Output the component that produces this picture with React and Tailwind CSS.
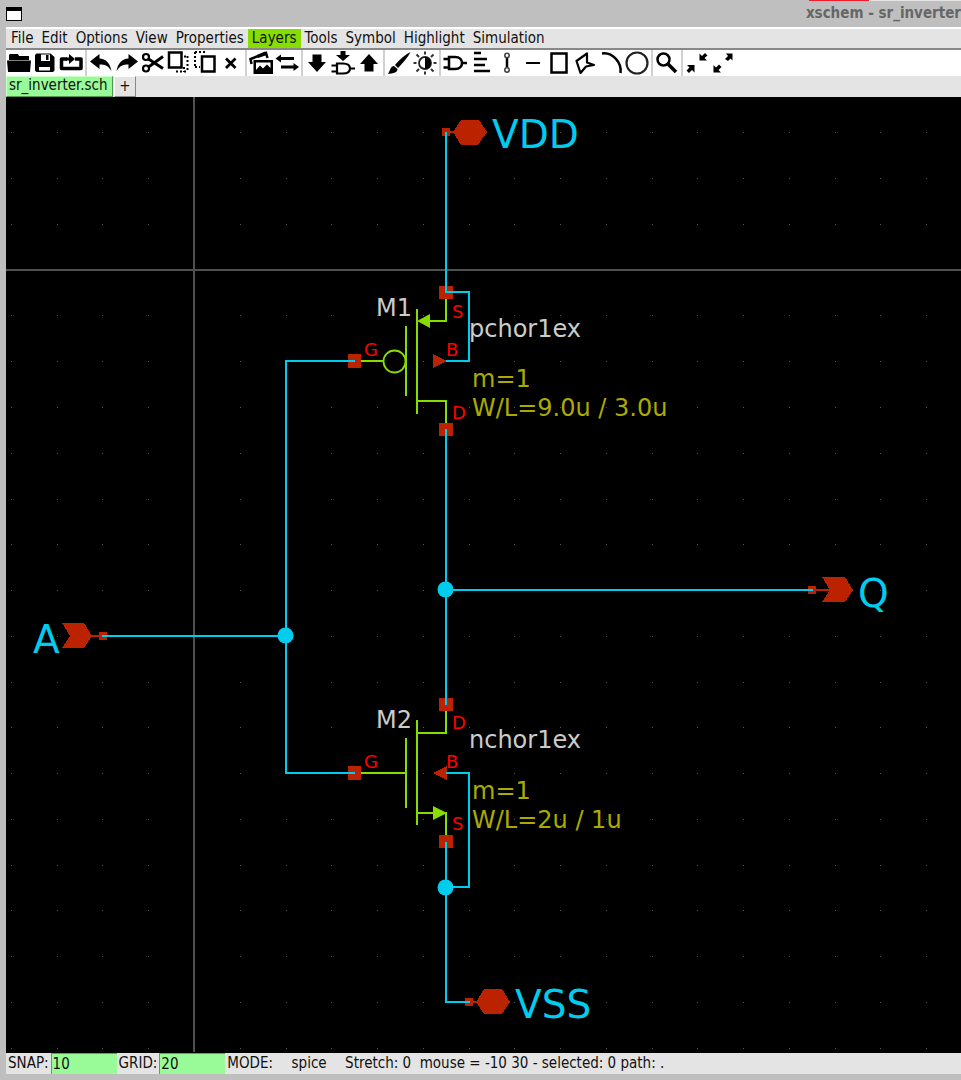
import React from "react";

const MENUS = ["File", "Edit", "Options", "View", "Properties", "Layers", "Tools", "Symbol", "Highlight", "Simulation"];

const ICONS = {
  open: (
    <>
      <path d="M3 10V5l1-1h8l1 2h10v4z" />
      <path d="M1 10.5h24L24 22H2z" />
    </>
  ),
  save: (
    <path
      fillRule="evenodd"
      d="M4.500 3.500H18.500L22.500 7V20.500L21 22H4.500L3 20.500V5zM9 4.500V11H18V4.500zM7 17V20.500H18V17zM14 5H16.500V10H14z"
    />
  ),
  reload: (
    <>
      <path d="M9 9H3.500V18.500H23V9H17" fill="none" stroke="#000" strokeWidth="3.500" strokeLinejoin="round" />
      <path d="M11 4l6 5-6 5V10.500H8v-3h3z" />
    </>
  ),
  undo: <path d="M2 11.500L11.500 4V8.500C18 9 22 13 23.500 21C20 15.500 17 14.500 11.500 14.500V19z" />,
  redo: <path d="M24 11.500L14.500 4V8.500C8 9 4 13 2.500 21C6 15.500 9 14.500 14.500 14.500V19z" />,
  cut: (
    <g fill="none" stroke="#000" strokeWidth="2.200">
      <circle cx="6" cy="7" r="3" />
      <circle cx="6" cy="18.500" r="3" />
      <path d="M8.500 9L23 18.500M8.500 17L23 6.500" strokeWidth="2.800" />
    </g>
  ),
  copy: (
    <g fill="none" stroke="#000">
      <path d="M3 2.500H15.500V17.500H3z" strokeWidth="2.500" />
      <path d="M21.500 6V22M10 21.500H22M18 6.500H22M18 17V22" strokeWidth="2" strokeDasharray="2 2" />
    </g>
  ),
  move: (
    <g fill="none" stroke="#000">
      <path d="M10 6.500H22.500V21.500H10z" strokeWidth="2.500" />
      <path d="M3 2V18M3 2H15M3 17H8" strokeWidth="2" strokeDasharray="2 2" />
    </g>
  ),
  remove: <path d="M8 8.500L17.500 18M17.500 8.500L8 18" stroke="#000" strokeWidth="2.800" />,
  images: (
    <>
      <path d="M3.500 14L2.500 9L18 3L19.500 8" fill="none" stroke="#000" strokeWidth="2.500" />
      <path d="M9 5L17 1.500L19 5L10 8z" />
      <path fillRule="evenodd" d="M5.500 10H25V24H5.500zM8 12.500V20L12 15.500L15 18.500L19 14.500L22.500 18V12.500z" />
    </>
  ),
  swap: (
    <>
      <path d="M1.500 8.500L7 4.500V7H20V10H7V12.500z" />
      <path d="M25 17L19.500 13V15.500H7V18.500H19.500V21z" />
    </>
  ),
  down: <path d="M8.500 4.500H17.500V12H22L13 22L4 12H8.500z" />,
  descend: (
    <>
      <path d="M10.500 1H15.500V5H20L13 11L6 5H10.500z" />
      <path d="M7 13.500H13C18 13.500 20 16 20 18.500C20 21 18 23.500 13 23.500H7zM1.500 15.500H7M1.500 21.500H7M20 18.500H25" fill="none" stroke="#000" strokeWidth="2.200" />
    </>
  ),
  up: <path d="M8.500 21.500H17.500V14H22L13 4L4 14H8.500z" />,
  brush: (
    <>
      <path d="M24.500 2C20 4 14 9 9 15L12 18C17 13 22 7 24.500 2z" />
      <path d="M8 16C4.500 16 4.500 20 2 24C6 23.500 11.500 23 11.500 19z" />
    </>
  ),
  sun: (
    <>
      <circle cx="13" cy="13" r="6" fill="none" stroke="#222" strokeWidth="1.800" />
      <path d="M13 7A6 6 0 0 1 13 19z" />
      <path d="M13 1.500V4.500M13 21.500V24.500M1.500 13H4.500M21.500 13H24.500M4.500 4.500L7 7M19 19L21.500 21.500M4.500 21.500L7 19M19 7L21.500 4.500" stroke="#333" strokeWidth="2" />
    </>
  ),
  gate: (
    <path d="M7 7H13C18 7 20 10 20 13C20 16 18 19 13 19H7zM1.500 9H7M1.500 17.500H7M20 13H25" fill="none" stroke="#000" strokeWidth="2.500" />
  ),
  text: <path d="M6 3H13M6 9H19M6 15H17M6 21H22" stroke="#000" strokeWidth="2.500" />,
  wire: (
    <g fill="none" stroke="#444">
      <path d="M13 7V18" stroke="#000" strokeWidth="2.500" />
      <circle cx="13" cy="5.500" r="2.200" strokeWidth="1.600" />
      <circle cx="13" cy="20" r="2.200" strokeWidth="1.600" />
    </g>
  ),
  line: <path d="M6 13H20" stroke="#000" strokeWidth="2" />,
  rect: <path d="M5.500 3.500H20.500V22.500H5.500z" fill="none" stroke="#000" strokeWidth="2.500" />,
  polygon: (
    <path d="M4.500 11L15 3.500L15 12.500L22 15L14 16.500L8.500 23z" fill="none" stroke="#000" strokeWidth="2.200" strokeLinejoin="round" />
  ),
  arc: <path d="M4 3.500C15 2 24 13 22.500 23" fill="none" stroke="#000" strokeWidth="2.500" />,
  circle: <circle cx="13" cy="13" r="10.500" fill="none" stroke="#222" strokeWidth="2.200" />,
  zoom: (
    <g fill="none" stroke="#000">
      <circle cx="9.500" cy="9.500" r="6" strokeWidth="2.500" />
      <path d="M14 14L22 22" strokeWidth="3.500" />
    </g>
  ),
  shrink: (
    <>
      <path d="M3 15H10.500V22.500L8 20L5 23L2.500 20.500L5.500 17.500z" />
      <path d="M15.500 10.500V3.500L18 6L21 3L23.500 5.500L20.500 8L23 10.500z" />
    </>
  ),
  expand: (
    <>
      <path d="M16 3.500H22.500V10.500L20.500 8.500L18 11L15 9L18 6z" />
      <path d="M3.500 15V22.500H11L8.500 20L11.500 17L9 14.500L6 17.500z" />
    </>
  ),
};

const TOOL_GROUPS = [
  [["open", "Open"], ["save", "Save"], ["reload", "Reload"]],
  [["undo", "Undo"], ["redo", "Redo"], ["cut", "Cut"], ["copy", "Duplicate"], ["move", "Move"], ["remove", "Delete"]],
  [["images", "Draw images"], ["swap", "Swap"]],
  [["down", "Push schematic"], ["descend", "Push symbol"], ["up", "Pop"]],
  [["brush", "Change colours"], ["sun", "Toggle theme"]],
  [["gate", "Insert symbol"], ["text", "Insert text"], ["wire", "Insert wire"], ["line", "Insert line"], ["rect", "Insert rectangle"], ["polygon", "Insert polygon"], ["arc", "Insert arc"], ["circle", "Insert circle"]],
  [["zoom", "Zoom box"]],
  [["shrink", "Zoom in"], ["expand", "Zoom full"]],
];

function Toolbar() {
  return (
    <div className="flex h-[26px] shrink-0 items-stretch overflow-hidden bg-white" role="toolbar" aria-label="Tools">
      {TOOL_GROUPS.map((group, i) => (
        <React.Fragment key={i}>
          {i > 0 && <span className="mx-px w-0.5 shrink-0 bg-[#d0d0d0]" />}
          {group.map(([icon, label]) => (
            <button key={icon} type="button" aria-label={label} className="size-[26px] shrink-0">
              <svg viewBox="0 0 26 26" className="size-[26px]">{ICONS[icon]}</svg>
            </button>
          ))}
        </React.Fragment>
      ))}
    </div>
  );
}

const STEP = 45.76;
const GRID_DOTS = [];
for (let r = -3; r <= 24; r++) {
  for (let c = -4; c <= 40; c++) {
    if (r !== 0 && c !== 0) GRID_DOTS.push(`M${Math.round(194 + c * STEP)} ${Math.round(269.7 + r * STEP)}h1v1h-1z`);
  }
}

function Schematic() {
  return (
    <svg className="block h-full min-h-[955px] w-full" role="img" aria-label="sr_inverter schematic" fontFamily="'DejaVu Sans', sans-serif">
      <g transform="translate(-6 -97)">
        <path d={GRID_DOTS.join("")} fill="#555" shapeRendering="crispEdges" />
        <path d="M194 97V3000M6 270H4000" stroke="#505050" strokeWidth="2" />

        <g fill="#bb2200" shapeRendering="crispEdges">
          <path d="M439 286h14v13h-14zM348 354h13v14h-13zM439 423h14v13h-14z" />
          <path d="M439 698h14v13h-14zM348 766h13v14h-13zM439 835h14v13h-14z" />
          <path d="M442 128h8v8h-8zM465 998h8v8h-8zM99 632h8v8h-8zM808 586h8v8h-8z" />
          <path d="M433 354L447 361L433 368zM447 766L433 773L447 780z" />
          <path d="M453 132L461 120H479L487 132L478 145H461z" />
          <path d="M476 1002L484 989H502L510 1002L502 1014H484z" />
          <path d="M62 623H84L92 636L84 648H62L70 636z" />
          <path d="M822 577H845L853 590L845 602H822L830 590z" />
        </g>
        <path d="M450 132H455M473 1002H478M91 636H100M816 590H831" stroke="#bb2200" strokeWidth="2" />

        <g fill="none" stroke="#88dd00" strokeWidth="2">
          <path d="M446 299V321H430M417 309V414M406 326V396M361 361H384M417 401H446V423" />
          <circle cx="394.500" cy="361.500" r="11" strokeWidth="1.800" />
          <path d="M446 711V733H417M417 720V825M406 738V808M361 773H406M417 813H434M446 812V835" />
        </g>
        <path d="M417 321L430 314V328zM447 813L433 806V820z" fill="#88dd00" />

        <g fill="none" stroke="#00ccee" strokeWidth="2">
          <path d="M446 132V292H469V361H446" />
          <path d="M355 361H286V773H355" />
          <path d="M446 429V705M446 590H813M102 636H286" />
          <path d="M446 773H469V887H446M446 842V1002H470" />
        </g>
        <g fill="#00ccee">
          <circle cx="445.500" cy="589.500" r="8" />
          <circle cx="285.500" cy="635.500" r="8" />
          <circle cx="445.500" cy="887.500" r="8" />
        </g>

        <g fill="#00ccee" fontSize="39">
          <text x="492" y="148">VDD</text>
          <text x="515" y="1018">VSS</text>
          <text x="33" y="653">A</text>
          <text x="858" y="607">Q</text>
        </g>
        <g fill="#cccccc" fontSize="24">
          <text x="376" y="316">M1</text>
          <text x="469" y="337">pchor1ex</text>
          <text x="376" y="728">M2</text>
          <text x="469" y="748">nchor1ex</text>
        </g>
        <g fill="#aaaa00" fontSize="24">
          <text x="472" y="387">m=1</text>
          <text x="472" y="416">W/L=9.0u / 3.0u</text>
          <text x="472" y="799">m=1</text>
          <text x="472" y="828">W/L=2u / 1u</text>
        </g>
        <g fill="#ff0000" fontSize="18">
          <text x="452" y="318">S</text>
          <text x="364" y="356">G</text>
          <text x="446" y="356">B</text>
          <text x="452" y="419">D</text>
          <text x="452" y="729">D</text>
          <text x="364" y="768">G</text>
          <text x="446" y="768">B</text>
          <text x="452" y="830">S</text>
        </g>
      </g>
    </svg>
  );
}

function StatusField({ id, label, value }) {
  return (
    <>
      <label htmlFor={id} className="px-0.5 pb-px">{label}</label>
      <input id={id} defaultValue={value} className="h-full w-[66px] border-t border-l border-[#5f9e5f] bg-[#98fb98] px-px pb-px outline-none" />
    </>
  );
}

export default function App() {
  return (
    <div className="flex min-h-screen flex-col overflow-hidden bg-[#bfbfbf] pb-1.5 pl-1.5 text-[15px] text-[#111] [font-family:'DejaVu_Sans_Condensed','DejaVu_Sans',sans-serif]">
      <header className="flex h-[27px] shrink-0 items-start justify-between">
        <button type="button" aria-label="Window menu" className="mt-[7px] h-3.5 w-4 border border-t-4 border-black bg-white" />
        <div className="relative">
          <div className="absolute inset-x-0 top-0 flex h-px">
            <span className="ml-[3px] w-[60px] bg-[#ee1c2c]" />
            <span className="flex-1 bg-[#e4e4e4]" />
          </div>
          <h1 className="pt-[3px] leading-5 font-bold whitespace-nowrap text-[#666]">xschem - sr_inverter</h1>
        </div>
      </header>

      <nav className="flex h-[23px] shrink-0 border-t-2 border-b-2 border-t-white border-b-[#888] bg-[#e4e4e4] pl-px" aria-label="Main menu">
        {MENUS.map((m) => (
          <button key={m} type="button" className={m === "Layers" ? "bg-[#88dd00] px-1 leading-[19px]" : "px-1 leading-[19px]"}>{m}</button>
        ))}
      </nav>

      <Toolbar />

      <div className="flex h-[21px] shrink-0 gap-px bg-[#e4e4e4]" role="tablist">
        <button type="button" role="tab" aria-selected="true" className="w-[107px] border border-t-[#c8ffc8] border-r-[#4f9a4f] border-b-[#4f9a4f] border-l-[#c8ffc8] bg-[#98fb98] px-0.5 pb-1 text-left leading-4">sr_inverter.sch</button>
        <button type="button" aria-label="New tab" className="w-[22px] border border-t-white border-r-[#888] border-b-[#888] border-l-white pb-0.5 leading-4">+</button>
      </div>

      <main className="flex-1 overflow-hidden bg-black">
        <Schematic />
      </main>

      <footer className="flex h-[21px] shrink-0 items-center overflow-hidden bg-[#e4e4e4] whitespace-pre">
        <StatusField id="snap" label="SNAP:" value="10" />
        <StatusField id="grid" label="GRID:" value="20" />
        <span className="pb-px pl-0.5">MODE:</span>
        <span className="w-[72px] pb-px text-center">spice</span>
        <span className="pb-px">{"Stretch: 0  mouse = -10 30 - selected: 0 path: ."}</span>
      </footer>
    </div>
  );
}
